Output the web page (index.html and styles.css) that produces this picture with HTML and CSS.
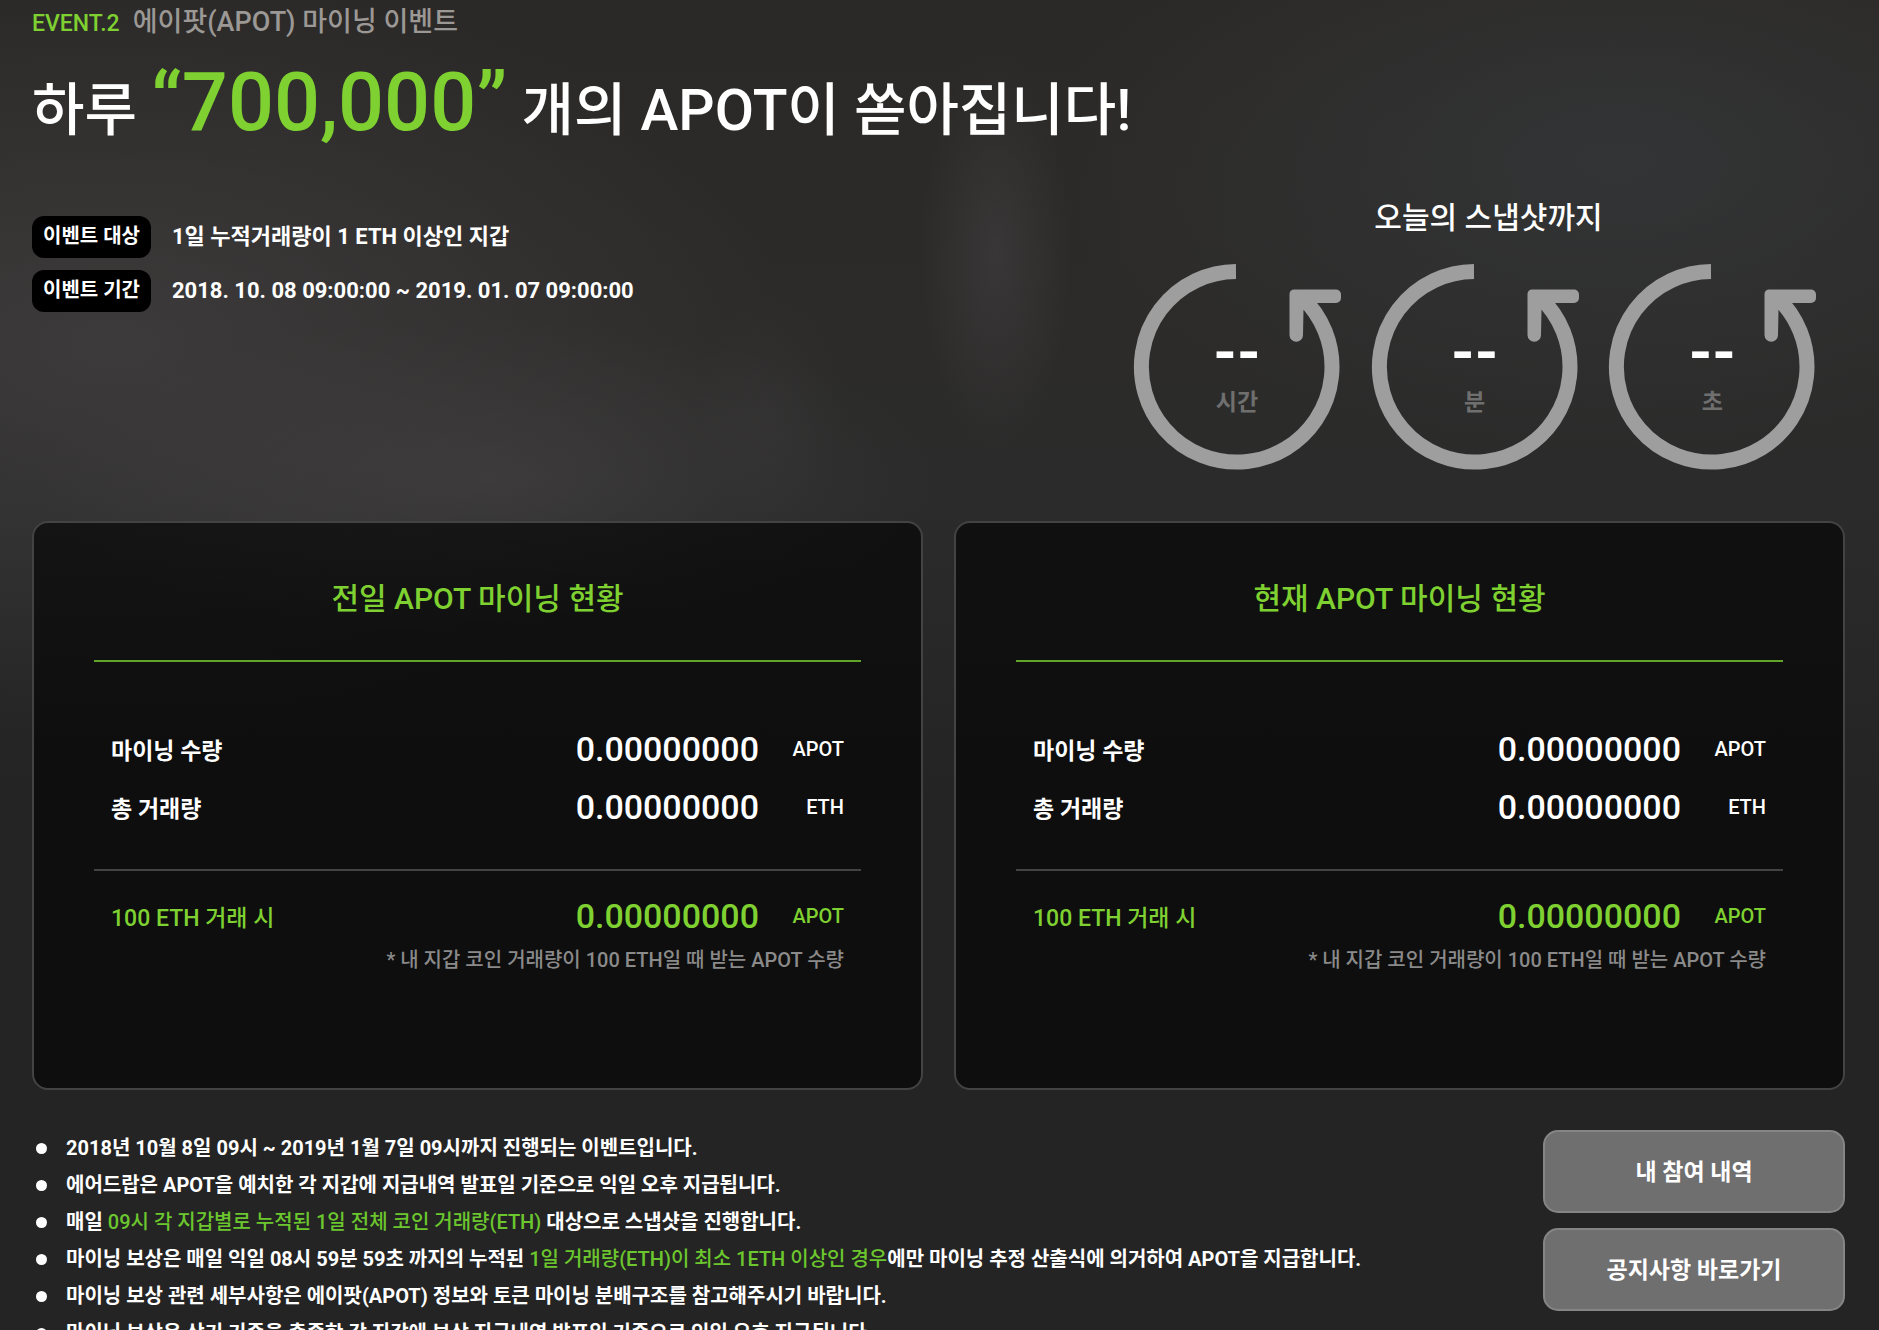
FILE: index.html
```html
<!DOCTYPE html>
<html lang="ko">
<head>
<meta charset="utf-8">
<title>에이팟(APOT) 마이닝 이벤트</title>
<link rel="stylesheet" href="styles.css">
</head>
<body>
<svg class="defs" aria-hidden="true">
  <symbol id="dial" viewBox="0 0 208 206">
    <path d="M103 7.500A95.300 95.300 0 1 0 169 33.400" fill="none" stroke="currentColor" stroke-width="15"/>
    <path d="M161 25.500H203a5 5 0 0 1 5 5V34a5 5 0 0 1-5 5H184L170.500 46 170 71a6.700 6.700 0 0 1-13.500 0V30a4.500 4.500 0 0 1 4.500-4.500Z" fill="currentColor"/>
  </symbol>
</svg>
<main class="event">
  <header class="heading">
    <p class="eyebrow"><span class="eyebrow-no">EVENT.2</span><span class="eyebrow-name">에이팟(APOT) 마이닝 이벤트</span></p>
    <h1 class="title">하루 <strong class="amount">“700,000”</strong> 개의 APOT이 쏟아집니다!</h1>
  </header>

  <section class="overview">
    <dl class="facts">
      <div class="fact"><dt class="tag">이벤트 대상</dt><dd class="fact-text">1일 누적거래량이 1 ETH 이상인 지갑</dd></div>
      <div class="fact"><dt class="tag">이벤트 기간</dt><dd class="fact-text">2018. 10. 08 09:00:00 ~ 2019. 01. 07 09:00:00</dd></div>
    </dl>
    <div class="countdown">
      <h2 class="countdown-title">오늘의 스냅샷까지</h2>
      <div class="dials">
        <div class="dial"><svg class="dial-ring" aria-hidden="true"><use href="#dial"/></svg><div class="dial-text"><span class="dial-value">--</span><span class="dial-unit">시간</span></div></div>
        <div class="dial"><svg class="dial-ring" aria-hidden="true"><use href="#dial"/></svg><div class="dial-text"><span class="dial-value">--</span><span class="dial-unit">분</span></div></div>
        <div class="dial"><svg class="dial-ring" aria-hidden="true"><use href="#dial"/></svg><div class="dial-text"><span class="dial-value">--</span><span class="dial-unit">초</span></div></div>
      </div>
    </div>
  </section>

  <section class="cards">
    <article class="card">
      <h2 class="card-title">전일 APOT 마이닝 현황</h2>
      <table class="stats">
        <tbody class="totals">
          <tr><th scope="row">마이닝 수량</th><td class="value">0.00000000</td><td class="unit">APOT</td></tr>
          <tr><th scope="row">총 거래량</th><td class="value">0.00000000</td><td class="unit">ETH</td></tr>
        </tbody>
        <tbody class="reward">
          <tr><th scope="row">100 ETH 거래 시</th><td class="value">0.00000000</td><td class="unit">APOT</td></tr>
        </tbody>
      </table>
      <p class="note">* 내 지갑 코인 거래량이 100 ETH일 때 받는 APOT 수량</p>
    </article>
    <article class="card">
      <h2 class="card-title">현재 APOT 마이닝 현황</h2>
      <table class="stats">
        <tbody class="totals">
          <tr><th scope="row">마이닝 수량</th><td class="value">0.00000000</td><td class="unit">APOT</td></tr>
          <tr><th scope="row">총 거래량</th><td class="value">0.00000000</td><td class="unit">ETH</td></tr>
        </tbody>
        <tbody class="reward">
          <tr><th scope="row">100 ETH 거래 시</th><td class="value">0.00000000</td><td class="unit">APOT</td></tr>
        </tbody>
      </table>
      <p class="note">* 내 지갑 코인 거래량이 100 ETH일 때 받는 APOT 수량</p>
    </article>
  </section>

  <footer class="bottom">
    <ul class="rules">
      <li>2018년 10월 8일 09시 ~ 2019년 1월 7일 09시까지 진행되는 이벤트입니다.</li>
      <li>에어드랍은 APOT을 예치한 각 지갑에 지급내역 발표일 기준으로 익일 오후 지급됩니다.</li>
      <li>매일 <em>09시 각 지갑별로 누적된 1일 전체 코인 거래량(ETH)</em> 대상으로 스냅샷을 진행합니다.</li>
      <li>마이닝 보상은 매일 익일 08시 59분 59초 까지의 누적된 <em>1일 거래량(ETH)이 최소 1ETH 이상인 경우</em>에만 마이닝 추정 산출식에 의거하여 APOT을 지급합니다.</li>
      <li>마이닝 보상 관련 세부사항은 에이팟(APOT) 정보와 토큰 마이닝 분배구조를 참고해주시기 바랍니다.</li>
      <li>마이닝 보상은 상기 기준을 충족한 각 지갑에 보상 지급내역 발표일 기준으로 익일 오후 지급됩니다.</li>
    </ul>
    <div class="actions">
      <button type="button" class="action">내 참여 내역</button>
      <button type="button" class="action">공지사항 바로가기</button>
    </div>
  </footer>
</main>
</body>
</html>
```
FILE: styles.css
```css
:root {
  --green: #7fd131;
  --line: #434343;
}

* {
  box-sizing: border-box;
  margin: 0;
  padding: 0;
}

body {
  background: #242424;
  color: #fff;
  font-family: Roboto, "Noto Sans CJK KR", sans-serif;
  font-weight: 500;
}

.defs {
  display: none;
}

.event {
  height: 100vh;
  overflow: hidden;
  padding: 0 34px 0 32px;
  background:
    radial-gradient(ellipse 4% 15% at 53% 19%, rgba(72, 69, 71, .45), transparent),
    radial-gradient(ellipse 4% 9% at 41% 31%, rgba(68, 66, 68, .2), transparent),
    radial-gradient(ellipse 36% 28% at 6% 26%, rgba(74, 71, 72, .55), transparent),
    radial-gradient(ellipse 24% 12% at 26% 36%, rgba(76, 73, 74, .45), transparent),
    radial-gradient(ellipse 30% 22% at 86% 12%, rgba(56, 59, 62, .6), transparent),
    linear-gradient(#2b2927 0, #2c2b2a 24%, #2b2b2b 38%, #242424 60%);
}

.eyebrow {
  display: flex;
  align-items: baseline;
  gap: 13px;
  line-height: 44px;
}

.eyebrow-no {
  color: var(--green);
  font-size: 23px;
}

.eyebrow-name {
  color: #9b9895;
  font-size: 27px;
}

.title {
  font-size: 57px;
  font-weight: 500;
  line-height: 114px;
}

.amount {
  color: var(--green);
  font-size: 81px;
  font-weight: 500;
}

.overview {
  display: flex;
  justify-content: space-between;
  margin-top: 26px;
}

.facts {
  display: flex;
  flex-direction: column;
  gap: 12px;
  padding-top: 22px;
}

.fact {
  display: flex;
  gap: 21px;
}

.tag {
  height: 42px;
  padding: 0 11px;
  border-radius: 12px;
  background: #000;
  font-size: 20px;
  font-weight: 700;
  line-height: 40px;
}

.fact-text {
  font-size: 22px;
  font-weight: 700;
  line-height: 42px;
}

.countdown {
  width: 713px;
}

.countdown-title {
  font-size: 30px;
  font-weight: 500;
  line-height: 48px;
  text-align: center;
}

.dials {
  display: grid;
  grid-template-columns: repeat(3, 1fr);
  margin-top: 22px;
}

.dial {
  display: grid;
  width: 209px;
  padding-left: 1px;
}

.dial-ring,
.dial-text {
  grid-area: 1 / 1;
}

.dial-ring {
  width: 208px;
  height: 206px;
  color: #9e9e9e;
}

.dial-text {
  display: flex;
  flex-direction: column;
  align-items: center;
  padding-top: 60px;
}

.dial-value {
  font-size: 60px;
  font-weight: 700;
  line-height: 58px;
}

.dial-unit {
  color: #6f6f6f;
  font-size: 23px;
  font-weight: 700;
  line-height: 42px;
}

.cards {
  display: grid;
  grid-template-columns: 1fr 1fr;
  gap: 31px;
  margin-top: 51px;
}

.card {
  min-height: 569px;
  padding: 45px 60px;
  border: 2px solid var(--line);
  border-radius: 16px;
  background: rgba(0, 0, 0, .6);
}

.card-title {
  padding-bottom: 30px;
  border-bottom: 2px solid #60a52a;
  color: var(--green);
  font-size: 30px;
  font-weight: 500;
  line-height: 62px;
  text-align: center;
}

.stats {
  width: 100%;
  margin-top: 58px;
  border-collapse: collapse;
}

.stats tr {
  height: 58px;
}

.stats th {
  padding-left: 17px;
  font-size: 23px;
  font-weight: 700;
  text-align: left;
}

.value {
  font-size: 34px;
  text-align: right;
}

.unit {
  width: 102px;
  padding-right: 17px;
  font-size: 20px;
  text-align: right;
}

.totals::after {
  content: "";
  display: table-row;
  height: 34px;
}

.reward {
  border-top: 2px solid var(--line);
  color: var(--green);
}

.stats .reward tr {
  height: 90px;
}

.stats .reward th {
  font-weight: 500;
}

.note {
  margin-top: -14px;
  padding-right: 17px;
  color: #8a8a8a;
  font-size: 20px;
  line-height: 28px;
  text-align: right;
}

.bottom {
  display: flex;
  justify-content: space-between;
  margin-top: 40px;
}

.rules {
  padding-left: 34px;
  font-size: 20px;
  font-weight: 700;
  line-height: 37px;
  list-style: none;
}

.rules li::before {
  content: "";
  display: inline-block;
  width: 11px;
  height: 11px;
  margin: 0 19px 1px -30px;
  border-radius: 50%;
  background: #fff;
}

.rules em {
  color: #6cc72e;
  font-style: normal;
  font-weight: 500;
}

.actions {
  display: flex;
  flex-direction: column;
  gap: 15px;
}

.action {
  width: 302px;
  height: 83px;
  padding-bottom: 4px;
  border: 2px solid #858585;
  border-radius: 15px;
  background: #6f6f6f;
  color: #fff;
  font: inherit;
  font-size: 23px;
  font-weight: 700;
}
```
